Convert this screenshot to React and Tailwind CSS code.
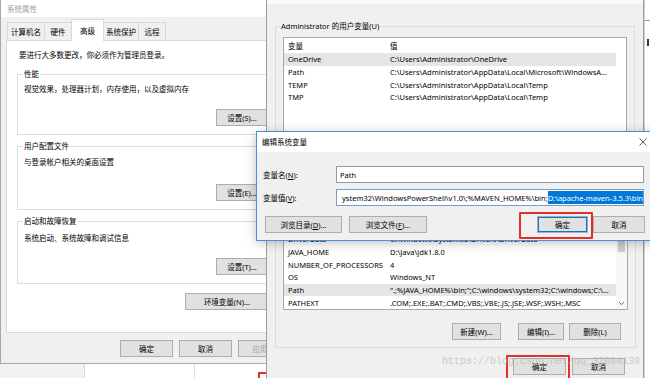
import React from "react";

const Btn = ({ children, className = "", muted = false }) => (
  <div
    className={`flex shrink-0 items-center justify-center h-[17px] bg-[#e1e1e1] border border-[#adadad] whitespace-nowrap ${
      muted ? "text-[#a3a3a3]" : "text-black"
    } ${className}`}
  >
    {children}
  </div>
);

const Group = ({ title, className = "", children }) => (
  <fieldset className={`border border-[#dcdcdc] ${className}`}>
    <legend className="ml-[5px] px-[1px] leading-[10px]">{title}</legend>
    {children}
  </fieldset>
);

const Row = ({ name, value, active = false }) => (
  <div className={`flex items-center h-[12.7px] w-[332px] shrink-0 whitespace-nowrap ${active ? "bg-[#e5e5e5]" : ""}`}>
    <div className="w-[106px] shrink-0 pl-[4px]">{name}</div>
    <div className="overflow-hidden">{value}</div>
  </div>
);

const userVars = [
  ["OneDrive", "C:\\Users\\Administrator\\OneDrive", true],
  ["Path", "C:\\Users\\Administrator\\AppData\\Local\\Microsoft\\WindowsA..."],
  ["TEMP", "C:\\Users\\Administrator\\AppData\\Local\\Temp"],
  ["TMP", "C:\\Users\\Administrator\\AppData\\Local\\Temp"],
];

const sysVars = [
  ["CLASSPATH", ".;%JAVA_HOME%\\lib;%JAVA_HOME%\\lib\\tools.jar"],
  ["ComSpec", "C:\\windows\\system32\\cmd.exe"],
  ["DriverData", "C:\\Windows\\System32\\Drivers\\DriverData"],
  ["JAVA_HOME", "D:\\Java\\jdk1.8.0"],
  ["NUMBER_OF_PROCESSORS", "4"],
  ["OS", "Windows_NT"],
  ["Path", "\".;%JAVA_HOME%\\bin;\";C:\\windows\\system32;C:\\windows;C:\\...", true],
  ["PATHEXT", ".COM;.EXE;.BAT;.CMD;.VBS;.VBE;.JS;.JSE;.WSF;.WSH;.MSC"],
];

const tabs = ["计算机名", "硬件", "高级", "系统保护", "远程"];
const tabW = ["w-[38px]", "w-[28px]", "w-[33px]", "w-[36px]", "w-[28px]"];

export default function App() {
  return (
    <div className="relative w-[650px] h-[378px] overflow-hidden bg-white text-[7.5px] leading-[10px] text-black font-['Noto_Sans','Noto_Sans_CJK_SC',sans-serif]">
      {/* desktop behind, below the system window */}
      <div className="absolute left-0 top-[364px] w-[266px] h-[14px] flex">
        <div className="w-[85px] bg-[#f2f2f2] border-r border-[#d6d6d6]" />
        <div className="w-[110px] bg-white border-r border-[#dedede]" />
      </div>
      <div className="absolute left-[258px] top-[372px] w-[30px] h-[14px] border-2 border-[#e0302c] rounded-[1px]" />

      {/* 系统属性 */}
      <div className="absolute left-0 top-0 w-[300px] h-[364px] bg-[#f0f0f0] border-l border-b border-[#a8a8a8] flex flex-col">
        <div className="h-[17px] shrink-0 bg-white flex items-center pl-[6px] text-[#9b9b9b]">系统属性</div>
        <div className="h-[23px] shrink-0 flex items-end pl-[6px]">
          {tabs.map((t, i) =>
            i === 2 ? (
              <div
                key={t}
                className={`relative z-10 -ml-px -mb-px h-[22px] bg-white border border-b-0 border-[#d9d9d9] flex items-center justify-center ${tabW[i]}`}
              >
                {t}
              </div>
            ) : (
              <div
                key={t}
                className={`h-[18px] border border-b-0 border-[#d9d9d9] bg-[#f0f0f0] flex items-center justify-center ${i ? "-ml-px" : ""} ${tabW[i]}`}
              >
                {t}
              </div>
            )
          )}
        </div>
        <div className="mx-[5px] h-[293px] shrink-0 bg-white border border-[#d9d9d9] flex flex-col px-[10px]">
          <div className="pt-[9px] pl-[2px]">要进行大多数更改，你必须作为管理员登录。</div>
          <Group title="性能" className="mt-[9px] w-[264px]">
            <div className="pl-[6px] pt-[5px]">视觉效果，处理器计划，内存使用，以及虚拟内存</div>
            <div className="pl-[198px] mt-[15px] pb-[8px]">
              <Btn className="w-[52px]">设置(S)...</Btn>
            </div>
          </Group>
          <Group title="用户配置文件" className="mt-[6px] w-[264px]">
            <div className="pl-[6px] pt-[6px]">与登录帐户相关的桌面设置</div>
            <div className="pl-[198px] mt-[17px] pb-[8px]">
              <Btn className="w-[52px]">设置(E)...</Btn>
            </div>
          </Group>
          <Group title="启动和故障恢复" className="mt-[6px] w-[264px]">
            <div className="pl-[6px] pt-[7px]">系统启动、系统故障和调试信息</div>
            <div className="pl-[198px] mt-[15px] pb-[8px]">
              <Btn className="w-[52px]">设置(T)...</Btn>
            </div>
          </Group>
          <div className="mt-[9px] pl-[168px]">
            <Btn className="w-[84px]">环境变量(N)...</Btn>
          </div>
        </div>
        <div className="mt-[7px] flex gap-[6px] pl-[119px]">
          <Btn className="w-[53px]">确定</Btn>
          <Btn className="w-[53px]">取消</Btn>
          <Btn className="w-[53px]" muted>应用(A)</Btn>
        </div>
      </div>

      {/* 环境变量 */}
      <div className="absolute left-[266px] top-0 w-[378px] h-[400px] bg-[#f0f0f0] border-l border-r border-[#9c9c9c] flex flex-col">
        <div className="h-[4px] shrink-0 bg-[#fafafa]" />
        <fieldset className="ml-[8px] mt-[17px] w-[360px] border border-[#dcdcdc]">
          <legend className="ml-[4px] px-[1px] leading-[10px]">Administrator 的用户变量(U)</legend>
          <div className="pt-[6px] px-[7px]">
            <div className="h-[106px] bg-white border border-[#a9a9a9] flex flex-col overflow-hidden">
              <div className="h-[15px] shrink-0 flex items-center">
                <div className="w-[106px] pl-[4px]">变量</div>
                <div>值</div>
              </div>
              {userVars.map(([n, v, a]) => (
                <Row key={n} name={n} value={v} active={a} />
              ))}
            </div>
            <div className="mt-[4px] pb-[6px] flex justify-end gap-[5px]">
              <Btn className="w-[50px]">新建(N)...</Btn>
              <Btn className="w-[50px]">编辑(E)...</Btn>
              <Btn className="w-[50px]">删除(D)</Btn>
            </div>
          </div>
        </fieldset>
        <fieldset className="ml-[8px] mt-[3px] w-[360px] border border-[#dcdcdc]">
          <legend className="ml-[4px] px-[1px] leading-[10px]">系统变量(S)</legend>
          <div className="pt-[6px] px-[7px]">
            <div className="h-[120px] bg-white border border-[#a9a9a9] flex overflow-hidden">
              <div className="flex-1 flex flex-col">
                <div className="h-[16.5px] shrink-0 flex items-center">
                  <div className="w-[106px] pl-[4px]">变量</div>
                  <div>值</div>
                </div>
                {sysVars.map(([n, v, a]) => (
                  <Row key={n} name={n} value={v} active={a} />
                ))}
              </div>
              <div className="w-[11px] shrink-0 bg-[#f7f7f7] flex flex-col items-center">
                <div className="h-[14px]" />
                <div className="w-[7px] h-[47px] bg-[#cdcdcd]" />
                <div className="flex-1" />
                <svg width="7" height="5" viewBox="0 0 7 5" className="mb-[3px]">
                  <path d="M1 1.2 L3.5 3.6 L6 1.2" fill="none" stroke="#606060" strokeWidth="0.9" />
                </svg>
              </div>
            </div>
            <div className="mt-[13px] pb-[7px] flex pl-[169px]">
              <Btn className="w-[49px]">新建(W)...</Btn>
              <Btn className="w-[46px] ml-[17px]">编辑(I)...</Btn>
              <Btn className="w-[52px] ml-[5px]">删除(L)</Btn>
            </div>
          </div>
        </fieldset>
        <div className="mt-[10px] flex gap-[6px] pl-[246px]">
          <Btn className="w-[53px]">确定</Btn>
          <Btn className="w-[53px]">取消</Btn>
        </div>
      </div>
      <div className="absolute left-[506px] top-[355px] w-[64px] h-[26px] border-2 border-[#e0302c] rounded-[1px]" />

      {/* sliver of another window at the right edge */}
      <div className="absolute left-[644px] top-0 w-[6px] h-[378px] bg-white border-l border-[#d0d0d0]">
        <div className="mt-[20px] h-px bg-[#6fa8dc]" />
        <div className="ml-[2px] mt-[18px] w-[1.5px] h-[7px] bg-[#333]" />
      </div>

      {/* 编辑系统变量 */}
      <div className="absolute left-[256px] top-[131px] w-[400px] h-[110px] bg-[#f0f0f0] border border-[#4a90d9] shadow-[0_2px_10px_rgba(0,0,0,0.25)] flex flex-col">
        <div className="h-[20px] shrink-0 bg-white flex items-center justify-between pl-[5px] pr-[8px]">
          <span>编辑系统变量</span>
          <svg width="8" height="8" viewBox="0 0 8 8">
            <path d="M0.5 0.5 L7.5 7.5 M7.5 0.5 L0.5 7.5" stroke="#333" strokeWidth="0.8" />
          </svg>
        </div>
        <div className="mt-[14px] flex items-center pl-[6px]">
          <div className="w-[73px] shrink-0">
            变量名(<span className="underline">N</span>):
          </div>
          <div className="w-[308px] h-[17px] bg-white border border-[#9a9a9a] flex items-center pl-[3px]">Path</div>
        </div>
        <div className="mt-[6px] flex items-center pl-[6px]">
          <div className="w-[73px] shrink-0">
            变量值(<span className="underline">V</span>):
          </div>
          <div className="w-[308px] h-[17px] bg-white border border-[#7a9cc7] flex items-center justify-end overflow-hidden whitespace-nowrap">
            <span className="shrink-0">ystem32\WindowsPowerShell\v1.0\;%MAVEN_HOME%\bin;</span>
            <span className="shrink-0 bg-[#0078d7] text-white h-[13px] flex items-center">D:\apache-maven-3.5.3\bin</span>
          </div>
        </div>
        <div className="mt-[10px] flex pl-[8px]">
          <Btn className="w-[77px]">
            浏览目录(<span className="underline">D</span>)...
          </Btn>
          <Btn className="w-[78px] ml-[7px]">
            浏览文件(<span className="underline">F</span>)...
          </Btn>
          <Btn className="w-[51px] ml-[110px] border-[#0078d7] shadow-[inset_0_0_0_1px_#0078d7]">确定</Btn>
          <Btn className="w-[52px] ml-[5px]">取消</Btn>
        </div>
        <div className="absolute left-[262px] top-[80px] w-[74px] h-[27px] border-2 border-[#e0302c] rounded-[1px]" />
      </div>

      {/* watermark */}
      <div className="absolute left-[442px] top-[356px] text-[10px] leading-[12px] font-['Liberation_Mono',monospace] text-[#b8b8b8] opacity-70 whitespace-nowrap">
        https://blog.csdn.net/qq_37084139
      </div>
    </div>
  );
}
